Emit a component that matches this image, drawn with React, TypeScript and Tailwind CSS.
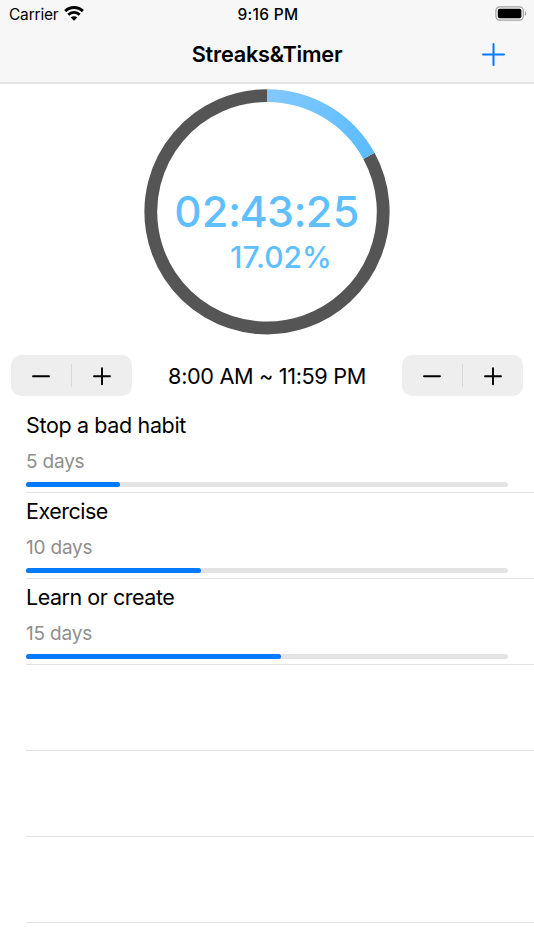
const habits = [
  { name: 'Stop a bad habit', days: 5, progress: 19.5, spacing: 'tracking-[-0.36px]' },
  { name: 'Exercise', days: 10, progress: 36.3, spacing: 'tracking-[-0.5px]' },
  { name: 'Learn or create', days: 15, progress: 52.9, spacing: 'tracking-[-0.47px]' },
]

const EMPTY_ROWS = 3

function WifiIcon() {
  return (
    <svg width="20" height="15" viewBox="0 0 20 15" fill="none" stroke="#000" strokeWidth="2.9">
      <path d="M1.2 5.1a12.6 12.6 0 0 1 17.6 0" />
      <path d="M4.3 8.7a8.2 8.2 0 0 1 11.4 0" />
      <path d="M10 14.8 6.8 11.6a4.6 4.6 0 0 1 6.4 0z" fill="#000" stroke="none" />
    </svg>
  )
}

function BatteryIcon() {
  return (
    <svg width="32" height="15" viewBox="0 0 32 15" fill="none">
      <rect x="0.9" y="0.9" width="27.4" height="13.2" rx="3.8" stroke="#a3a3a3" strokeWidth="1.2" />
      <rect x="2.8" y="2.8" width="23.6" height="9.4" rx="1.8" fill="#000" />
      <path d="M29.8 5.2c2 .7 2 3.9 0 4.6z" fill="#a3a3a3" />
    </svg>
  )
}

function Header() {
  return (
    <header className="h-[84px] border-b-2 border-[#e4e4e4] bg-[#f7f7f7]">
      <div className="grid h-[27px] grid-cols-3 items-center pr-[7px] pl-[9px] text-[15.5px]">
        <div className="flex items-center gap-[6px]">
          <span className="pt-[2px] tracking-[-0.2px]">Carrier</span>
          <WifiIcon />
        </div>
        <span className="pt-[2px] text-center font-[550] tracking-[0.3px]">9:16 PM</span>
        <div className="flex justify-end">
          <BatteryIcon />
        </div>
      </div>
      <div className="grid h-[55px] grid-cols-[1fr_auto_1fr] items-center px-[29px]">
        <span />
        <h1 className="text-[21.7px] font-semibold tracking-[-0.25px]">Streaks&amp;Timer</h1>
        <button className="justify-self-end" aria-label="Add">
          <svg width="23" height="23" viewBox="0 0 23 23" stroke="#007aff" strokeWidth="2" strokeLinecap="round">
            <path d="M11.5 1v21M1 11.5h21" />
          </svg>
        </button>
      </div>
    </header>
  )
}

const CENTER = { x: 123, y: 122.8 }
const RADIUS = 116.2

// Clockwise arc, with both ends given as a percentage of a full turn from 12 o'clock.
function arc(from: number, to: number) {
  const point = (percent: number) => {
    const angle = (percent / 100) * 2 * Math.PI
    return `${CENTER.x + RADIUS * Math.sin(angle)} ${CENTER.y - RADIUS * Math.cos(angle)}`
  }
  return `M${point(from)}A${RADIUS} ${RADIUS} 0 ${to - from > 50 ? 1 : 0} 1 ${point(to)}`
}

function TimerRing({ percent }: { percent: number }) {
  return (
    <section className="grid h-[257px] justify-center pt-[5px]">
      <svg className="col-start-1 row-start-1" width="246" height="246" viewBox="0 0 246 246" fill="none" strokeWidth="12.8">
        <defs>
          <linearGradient id="ring" gradientUnits="userSpaceOnUse" x1="123" y1="7" x2="224" y2="66">
            <stop offset="0" stopColor="#82c8ff" />
            <stop offset="1" stopColor="#5bbcff" />
          </linearGradient>
        </defs>
        <path d={arc(percent, 100)} stroke="#555" />
        <path d={arc(0, percent)} stroke="url(#ring)" />
      </svg>
      <div className="col-start-1 row-start-1 flex w-[246px] flex-col items-center pt-[96px] text-[#5fbfff]">
        <span className="text-[43px] leading-[52px] font-[550] tracking-[-0.55px] tabular-nums">02:43:25</span>
        <span className="mt-px ml-[28px] text-[30px] leading-[38px] font-[550]">{percent}%</span>
      </div>
    </section>
  )
}

function Stepper() {
  return (
    <div className="flex h-[41px] w-[121px] items-center rounded-[10px] bg-[#eee]">
      <button className="flex flex-1 justify-center" aria-label="Decrease">
        <svg width="20" height="20" viewBox="0 0 20 20" stroke="#000" strokeWidth="1.9" strokeLinecap="round">
          <path d="M2 10.3h16" />
        </svg>
      </button>
      <span className="h-[23px] w-px bg-[#d8d8d8]" />
      <button className="flex flex-1 justify-center" aria-label="Increase">
        <svg width="20" height="20" viewBox="0 0 20 20" stroke="#000" strokeWidth="1.9" strokeLinecap="round">
          <path d="M2 10.3h16M10 2.3v16" />
        </svg>
      </button>
    </div>
  )
}

export default function App() {
  return (
    <div className="h-[950px] w-[534px] overflow-hidden bg-white font-['Inter',sans-serif] text-black">
      <Header />
      <TimerRing percent={17.02} />
      <div className="mt-[14px] flex items-center justify-between px-[11px]">
        <Stepper />
        <span className="pt-[2px] text-[21.7px] tracking-[-0.36px]">8:00 AM ~ 11:59 PM</span>
        <Stepper />
      </div>
      <ul className="mt-[11px] pl-[26px]">
        {habits.map((habit) => (
          <li key={habit.name} className="h-[86px] border-b border-[#e3e3e3] pt-[3px] pr-[26px]">
            <p className={`text-[21.5px] leading-[30px] ${habit.spacing}`}>{habit.name}</p>
            <p className="mt-[9px] text-[19px] leading-[26px] tracking-[-0.2px] text-[#8e8e8e]">{habit.days} days</p>
            <div className="mt-[7px] h-[5px] rounded-full bg-[#e4e4e4]">
              <div className="h-full rounded-full bg-[#007aff]" style={{ width: `${habit.progress}%` }} />
            </div>
          </li>
        ))}
        {Array.from({ length: EMPTY_ROWS }, (_, i) => (
          <li key={i} className="h-[86px] border-b border-[#e3e3e3]" />
        ))}
      </ul>
    </div>
  )
}
